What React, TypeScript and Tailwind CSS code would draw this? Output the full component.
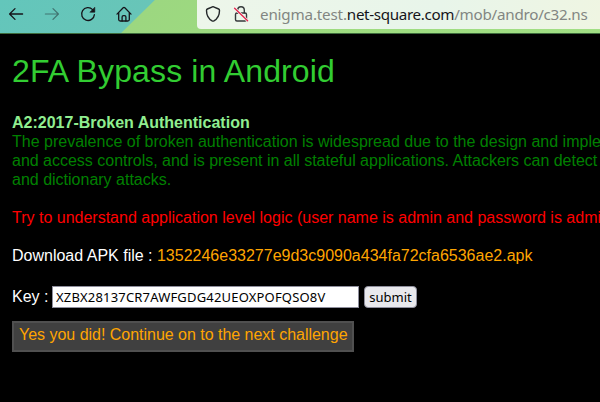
import React from "react";

const ink = { fill: "none", stroke: "#15141a", strokeLinecap: "round", strokeLinejoin: "round" } as const;

function BackIcon() {
  return (
    <svg width="16" height="16" viewBox="0 0 16 16" {...ink} strokeWidth="1.3">
      <path d="M14.6 8H1.8M7 2.6 1.6 8 7 13.4" />
    </svg>
  );
}

function ForwardIcon() {
  return (
    <svg width="16" height="16" viewBox="0 0 16 16" {...ink} strokeWidth="1.2" className="opacity-45">
      <path d="M1.4 8h12.8M9 2.6 14.4 8 9 13.4" />
    </svg>
  );
}

function ReloadIcon() {
  return (
    <svg width="16" height="16" viewBox="0 0 16 16" {...ink} strokeWidth="1.3">
      <path d="M12.6 3.6A6.4 6.4 0 1 0 14.4 8.6" />
      <path d="M14.8 1.6v4.6h-4.6z" fill="#15141a" strokeWidth="0.6" />
    </svg>
  );
}

function HomeIcon() {
  return (
    <svg width="16" height="16" viewBox="0 0 16 16" {...ink} strokeWidth="1.3">
      <path d="M1 8.1 7.2 1.7q.8-.7 1.6 0L15 8.1" />
      <path d="M2.7 7v6.5q0 1.5 1.5 1.5h7.6q1.5 0 1.5-1.5V7" />
      <path d="M6.1 15v-4q0-1.4 1.4-1.4h1q1.4 0 1.4 1.4v4" />
    </svg>
  );
}

function ShieldIcon() {
  return (
    <svg width="16" height="18" viewBox="0 0 16 18" {...ink} stroke="#25292b" strokeWidth="1.4">
      <path d="M8 1.6 13.6 4q.9.4.9 1.4c0 4.6-2.4 8.5-5.6 10.5q-.9.5-1.8 0C3.9 13.9 1.5 10 1.5 5.4q0-1 .9-1.4z" />
    </svg>
  );
}

function LockOffIcon() {
  return (
    <svg width="16" height="18" viewBox="0 0 16 18" {...ink} stroke="#35393b" strokeWidth="1.4">
      <path d="M4.7 8V5a3.3 3.3 0 0 1 6.6 0v3" />
      <path d="M4 8h8q1.5 0 1.5 1.5v5q0 1.5-1.5 1.5H4q-1.5 0-1.5-1.5v-5Q2.5 8 4 8z" />
      <path d="m1.6 3.2 13 12.6" stroke="#f3f6ef" strokeWidth="2.6" />
      <path d="m1.6 3.2 13 12.6" stroke="#e22850" strokeWidth="1.4" />
    </svg>
  );
}

function Toolbar() {
  return (
    <header className="flex h-[34px] items-start overflow-hidden border-b border-[#3d6b3c] bg-[linear-gradient(135.5deg,#63c6bb_0px,#68c5b8_108px,#9cd780_109px,#9edc80_240px,#a2df85_100%)]">
      <nav className="flex h-7 w-[197px] shrink-0 items-center gap-5 pl-2">
        <BackIcon />
        <ForwardIcon />
        <ReloadIcon />
        <HomeIcon />
      </nav>
      <div className="flex h-[29px] w-[403px] shrink-0 items-center rounded-bl bg-[linear-gradient(100deg,#edf6ea,#e8f5ea_60%,#eff5e2)] pb-0.5 pl-2">
        <ShieldIcon />
        <span className="ml-3 flex">
          <LockOffIcon />
        </span>
        <p className="ml-[11px] whitespace-nowrap font-['Noto_Sans',sans-serif] text-[15.2px] leading-7 text-[#828682]">
          <span className="tracking-[-0.17px]">enigma.test.</span>
          <span className="tracking-[-0.34px] text-[#15141a]">net-square.com</span>
          <span className="tracking-[-0.25px]">/mob/andro/c32.ns</span>
        </p>
      </div>
    </header>
  );
}

export default function App() {
  return (
    <div className="h-[402px] w-[600px] overflow-hidden bg-black font-['Liberation_Sans',Arial,sans-serif] text-[16px] leading-[19px]">
      <Toolbar />
      <main className="whitespace-nowrap pl-3 pt-[18px]">
        <h1 className="text-[32px] leading-[38px] tracking-[0.13px] text-[#32cd32]">2FA Bypass in Android</h1>
        <h2 className="mt-[23px] font-bold text-[#90ee90]">A2:2017-Broken Authentication</h2>
        <div className="text-[#008000]">
          <p>The prevalence of broken authentication is widespread due to the design and imple</p>
          <p className="tracking-[-0.01px]">
            and access controls, and is present in all stateful applications. Attackers can detect
          </p>
          <p>and dictionary attacks.</p>
        </div>
        <p className="mt-[19px] text-[#ff0000]">
          Try to understand application level logic (user name is admin and password is admi
        </p>
        <p className="mt-[19px] text-white">
          Download APK file : <a className="text-[#ffa500]">1352246e33277e9d3c9090a434fa72cfa6536ae2.apk</a>
        </p>
        <form className="mt-5 flex h-[23px] items-center text-white">
          <label className="w-10">Key :</label>
          <input
            readOnly
            defaultValue="XZBX28137CR7AWFGDG42UEOXPOFQSO8V"
            className="h-[22px] w-[307px] border border-[#8f8f9d] bg-white px-[3px] font-['Noto_Sans',sans-serif] text-[13px] tracking-[0.18px] text-black outline-none"
          />
          <button
            type="button"
            className="ml-[5px] h-[22px] w-[53px] rounded border border-[#8f8f9d] bg-[#e9e9ed] font-['Noto_Sans',sans-serif] text-[13px] leading-5 text-black"
          >
            submit
          </button>
        </form>
        <a className="mt-[13px] flex h-[31px] w-[342px] items-center border-2 border-[#505050] bg-[#404040] pb-[5px] pl-[5px] tracking-[-0.02px] text-[#ffa500]">
          Yes you did! Continue on to the next challenge
        </a>
      </main>
    </div>
  );
}
